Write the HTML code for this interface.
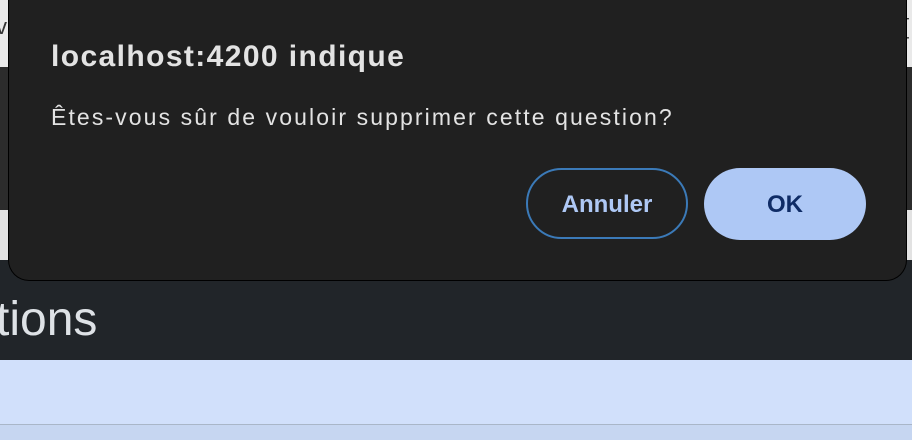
<!DOCTYPE html>
<html><head><meta charset="utf-8"><style>
html,body{margin:0;padding:0;width:912px;height:440px;overflow:hidden;background:#212529;font-family:"Liberation Sans",sans-serif;position:relative}
.a{position:absolute;white-space:nowrap}
</style></head><body>
<div class="a" style="left:0;top:0;width:912px;height:67px;background:#e9e9e9"></div>
<div class="a" style="left:-4px;top:14px;font-size:22px;color:#333">v</div>
<div class="a" style="left:903px;top:14px;font-size:22px;color:#333">[</div>
<div class="a" style="left:0;top:67px;width:912px;height:143px;background:#2c2c2c"></div>
<div class="a" style="left:0;top:210px;width:912px;height:50px;background:#e2e2e2"></div>
<div class="a" style="left:0;top:260px;width:912px;height:100px;background:#212529"></div>
<div class="a" style="left:-4px;top:290px;font-size:48px;color:#dee2e6;line-height:60px">tions</div>
<div class="a" style="left:0;top:360px;width:912px;height:64px;background:#d1e0fb"></div>
<div class="a" style="left:0;top:424px;width:912px;height:1px;background:#a9b6c8"></div>
<div class="a" style="left:0;top:425px;width:912px;height:15px;background:#c6d6f1"></div>
<div class="a" style="left:9px;top:-20px;width:897px;height:300px;background:#202020;border-radius:20px;box-shadow:0 0 0 1px #000"></div>
<div class="a" style="left:51px;top:40px;font-size:30px;font-weight:bold;color:#e3e3e3;letter-spacing:1.4px">localhost:4200 indique</div>
<div class="a" style="left:51px;top:104px;font-size:23px;color:#e3e3e3;letter-spacing:2.1px">Êtes-vous sûr de vouloir supprimer cette question?</div>
<div class="a" style="left:526px;top:168px;width:158px;height:67px;border:2px solid #3b7ab8;border-radius:36px;color:#aec8f5;font-size:24px;font-weight:bold;text-align:center;line-height:70px">Annuler</div>
<div class="a" style="left:704px;top:168px;width:162px;height:72px;background:#aec8f5;border-radius:36px;color:#0f2c66;font-size:24px;font-weight:bold;text-align:center;line-height:74px">OK</div>
</body></html>
